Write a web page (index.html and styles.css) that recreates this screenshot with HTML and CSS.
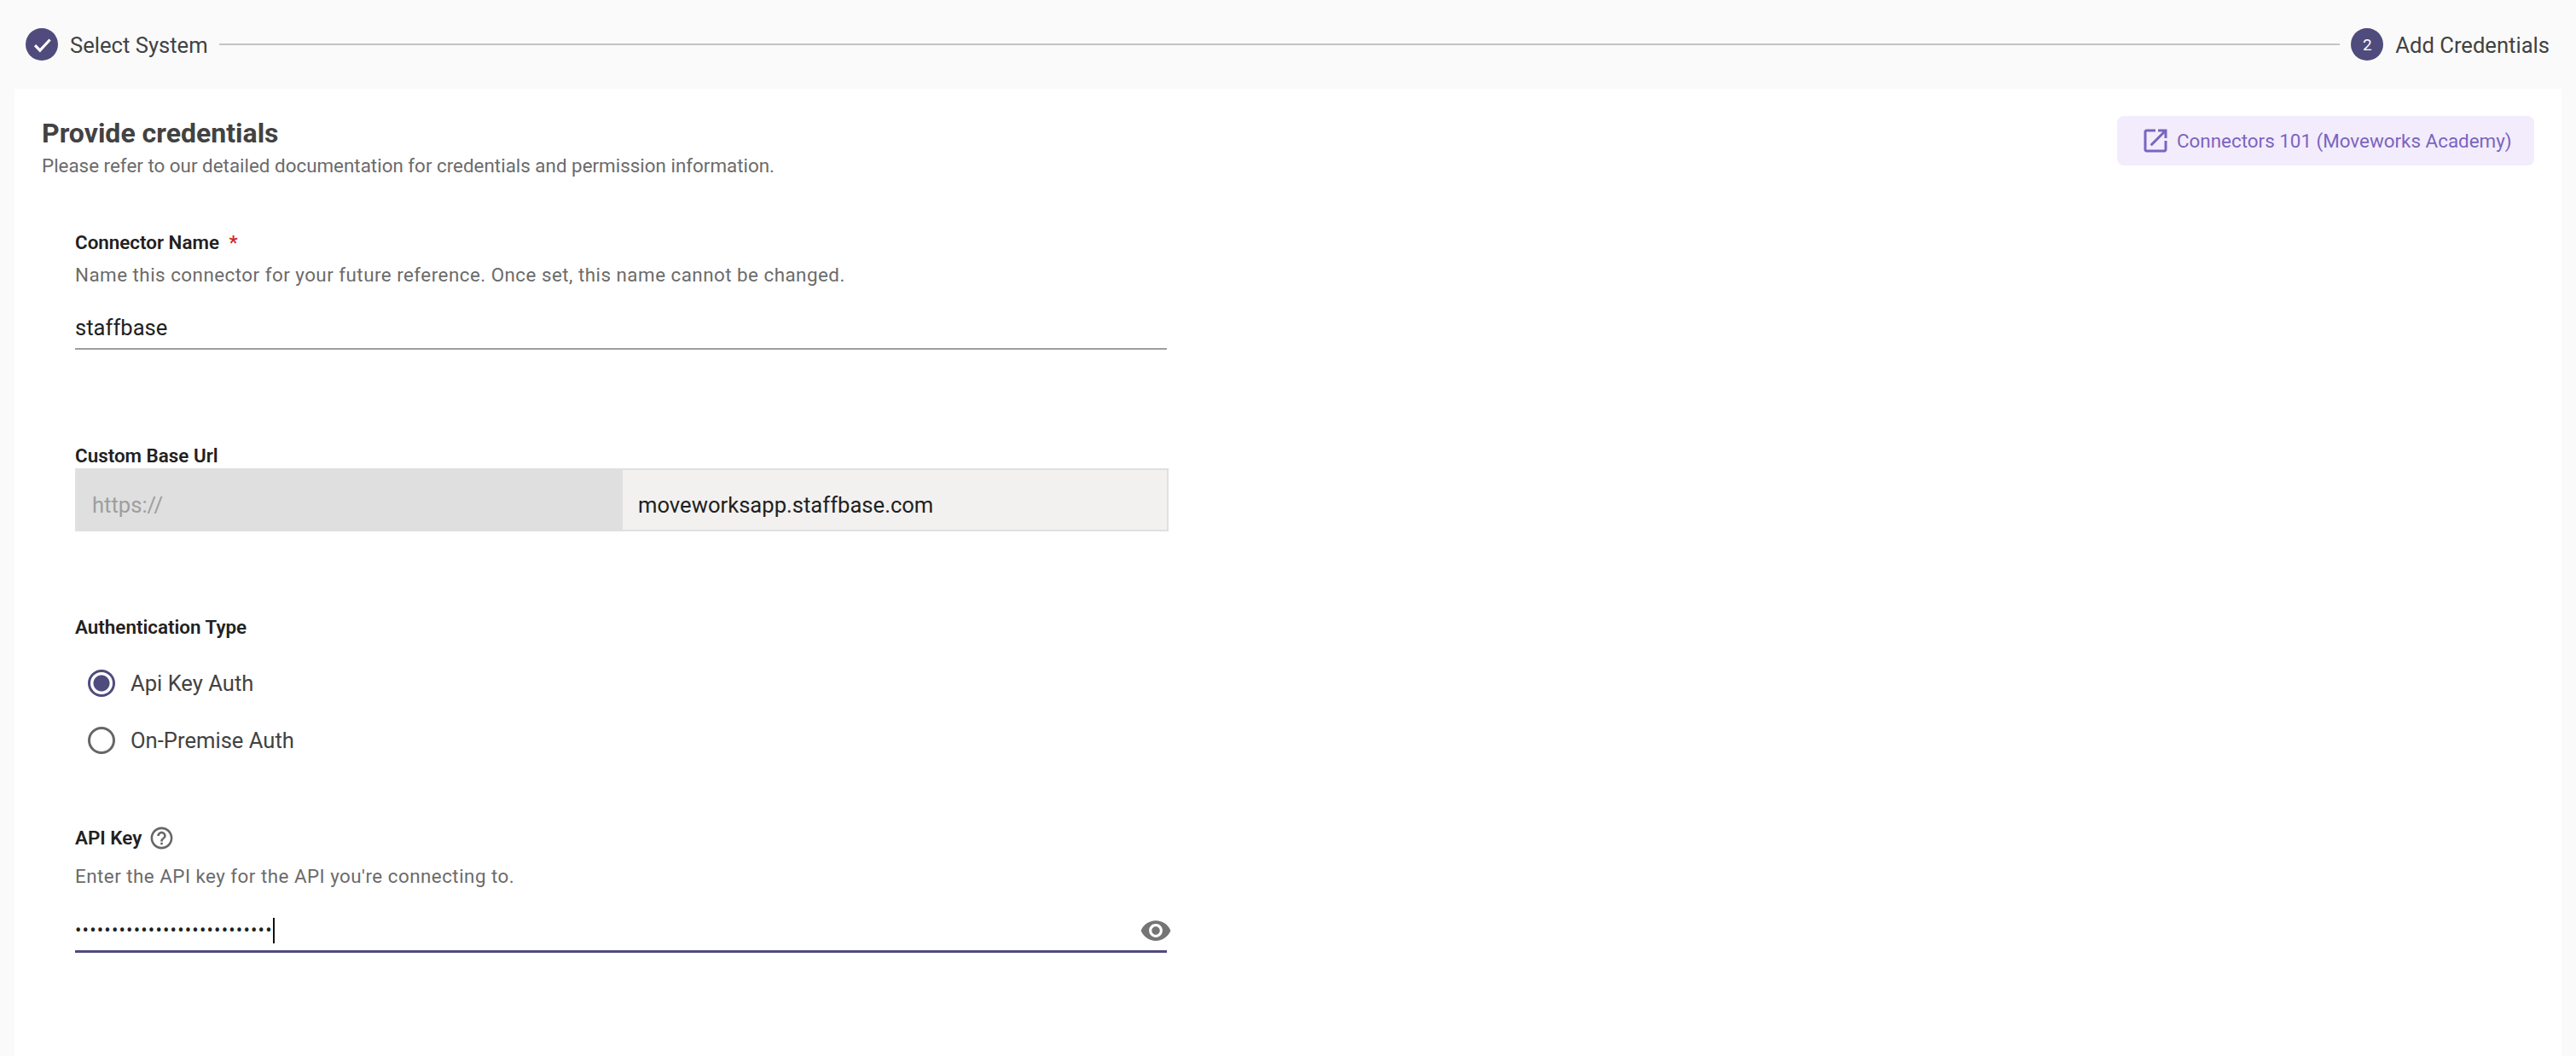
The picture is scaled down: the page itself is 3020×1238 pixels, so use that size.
FILE: index.html
```html
<!DOCTYPE html>
<html lang="en">
<head>
<meta charset="utf-8">
<title>Add Credentials</title>
<link rel="stylesheet" href="styles.css">
</head>
<body>
<div class="stepper">
  <div class="step">
    <span class="step-dot"><svg class="check" viewBox="0 0 24 24"><path d="M5 12.5l4.8 5L19.5 7" fill="none" stroke="#fff" stroke-width="2.6"/></svg></span>
    <span class="step-label">Select System</span>
  </div>
  <div class="step-line"></div>
  <div class="step">
    <span class="step-dot">2</span>
    <span class="step-label">Add Credentials</span>
  </div>
</div>
<main class="card">
  <header class="head">
    <div>
      <h1 class="title">Provide credentials</h1>
      <p class="subtitle">Please refer to our detailed documentation for credentials and permission information.</p>
    </div>
    <a class="academy"><svg class="academy-icon" viewBox="0 0 24 24"><path d="M19 19H5V5h7V3H5c-1.11 0-2 .9-2 2v14c0 1.1.89 2 2 2h14c1.1 0 2-.9 2-2v-7h-2v7zM14 3v2h3.59l-9.83 9.83 1.41 1.41L19 6.41V10h2V3h-7z"/></svg>Connectors 101 (Moveworks Academy)</a>
  </header>
  <form class="form">
    <section class="field field-name">
      <div class="label">Connector Name <span class="req">*</span></div>
      <div class="hint">Name this connector for your future reference. Once set, this name cannot be changed.</div>
      <div class="input">staffbase</div>
    </section>
    <section class="field field-url">
      <div class="label">Custom Base Url</div>
      <div class="url">
        <div class="url-prefix">https://</div>
        <div class="url-value">moveworksapp.staffbase.com</div>
      </div>
    </section>
    <section class="field field-auth">
      <div class="label">Authentication Type</div>
      <div class="radios">
        <div class="radio-row"><span class="radio radio-on"></span>Api Key Auth</div>
        <div class="radio-row"><span class="radio"></span>On-Premise Auth</div>
      </div>
    </section>
    <section class="field field-key">
      <div class="label label-key">API Key <svg class="help" viewBox="0 0 24 24"><path d="M11 18h2v-2h-2v2zm1-16C6.48 2 2 6.48 2 12s4.48 10 10 10 10-4.48 10-10S17.52 2 12 2zm0 18c-4.41 0-8-3.59-8-8s3.59-8 8-8 8 3.59 8 8-3.59 8-8 8zm0-14c-2.21 0-4 1.79-4 4h2c0-1.1.9-2 2-2s2 .9 2 2c0 2-3 1.75-3 5h2c0-2.25 3-2.5 3-5 0-2.21-1.79-4-4-4z"/></svg></div>
      <div class="hint hint-key">Enter the API key for the API you're connecting to.</div>
      <div class="input input-focus">
        <span class="dots">•••••••••••••••••••••••••••</span>
        <svg class="eye" viewBox="0 0 24 24"><path d="M12 4.5C7 4.5 2.73 7.61 1 12c1.73 4.39 6 7.5 11 7.5s9.27-3.11 11-7.5c-1.73-4.39-6-7.5-11-7.5zM12 17c-2.76 0-5-2.24-5-5s2.24-5 5-5 5 2.24 5 5-2.24 5-5 5zm0-8c-1.66 0-3 1.34-3 3s1.34 3 3 3 3-1.34 3-3-1.34-3-3-3z"/></svg>
      </div>
    </section>
  </form>
</main>
</body>
</html>
```
FILE: styles.css
```css
* { box-sizing: border-box; }
html, body { margin: 0; height: 100%; }
body {
  background: #fafafa;
  font-family: Roboto, "Liberation Sans", sans-serif;
  color: #424242;
  overflow: hidden;
}
.stepper {
  height: 104px;
  display: flex;
  align-items: center;
  padding: 0 31px 0 30px;
}
.step { display: flex; align-items: center; gap: 14px; }
.step-dot {
  width: 38px;
  height: 38px;
  border-radius: 50%;
  background: #4f4b7d;
  color: #fff;
  font-size: 19px;
  display: flex;
  align-items: center;
  justify-content: center;
}
.check { width: 29px; height: 29px; }
.step-label { font-size: 25.6px; color: #424242; padding-top: 1px; }
.step-line { flex: 1; height: 2px; background: #c4c4c4; margin: 0 13px; }
.card {
  margin: 0 17px;
  height: 1134px;
  background: #fff;
  padding: 32px 32px 0 32px;
}
.head { display: flex; justify-content: space-between; align-items: flex-start; }
.title {
  margin: 0;
  font-size: 32px;
  line-height: 40px;
  font-weight: 700;
  color: #424242;
}
.subtitle { margin: 2px 0 0; font-size: 22.4px; line-height: 32px; color: #6b6b6b; }
.academy {
  width: 489px;
  height: 58px;
  background: #f3ecfc;
  border-radius: 8px;
  color: #7b64c0;
  font-size: 22.4px;
  white-space: nowrap;
  display: flex;
  align-items: center;
  padding-left: 27px;
  gap: 7px;
}
.academy-icon { width: 36px; height: 36px; fill: #7b64c0; }
.form { width: 1282px; margin-left: 39px; margin-top: 60px; }
.label {
  font-size: 22.4px;
  line-height: 28px;
  font-weight: 600;
  color: #212121;
}
.req { color: #c62828; margin-left: 6px; }
.hint { font-size: 22.4px; letter-spacing: .47px; line-height: 32px; color: #6b6b6b; margin-top: 8px; }
.input {
  width: 1280px;
  height: 50px;
  border-bottom: 2px solid #9e9e9e;
  font-size: 25.6px;
  color: #212121;
  display: flex;
  align-items: center;
  justify-content: space-between;
  margin-top: 22px;
}
.field-url { margin-top: 110px; }
.url {
  display: flex;
  width: 1282px;
  height: 74px;
  margin-top: 1px;
  border: 2px solid #e0e0e0;
  font-size: 25.6px;
}
.url-prefix {
  width: 640px;
  background: #dfdfdf;
  color: #9e9e9e;
  padding: 11px 0 0 18px;
  display: flex;
  align-items: center;
}
.url-value {
  flex: 1;
  background: #f2f1f0;
  color: #212121;
  padding: 11px 0 0 18px;
  display: flex;
  align-items: center;
}
.field-auth { margin-top: 98px; }
.radios { margin-top: 36px; margin-left: 15px; display: flex; flex-direction: column; gap: 35px; }
.radio-row { display: flex; align-items: center; gap: 18px; font-size: 25.6px; color: #424242; height: 32px; padding-top: 0; }
.radio { width: 32px; height: 32px; border-radius: 50%; border: 3px solid #666; }
.radio-on {
  border-color: #4f4b7d;
  background: radial-gradient(circle, #4f4b7d 0 9px, #fff 10px);
}
.field-key { margin-top: 82px; }
.label-key { display: flex; align-items: center; gap: 8px; height: 32px; }
.help { width: 31px; height: 31px; fill: #666; }
.hint-key { margin-top: 13px; }
.input-focus { border-bottom: 3px solid #4f4b7d; height: 54px; margin-top: 20px; padding-top: 5px; }
.dots {
  font-size: 22px;
  letter-spacing: 1.16px;
  color: #212121;
  border-right: 2px solid #111;
  height: 30px;
  line-height: 30px;
}
.eye { width: 38px; height: 38px; fill: #757575; margin-right: -6px; }
```
